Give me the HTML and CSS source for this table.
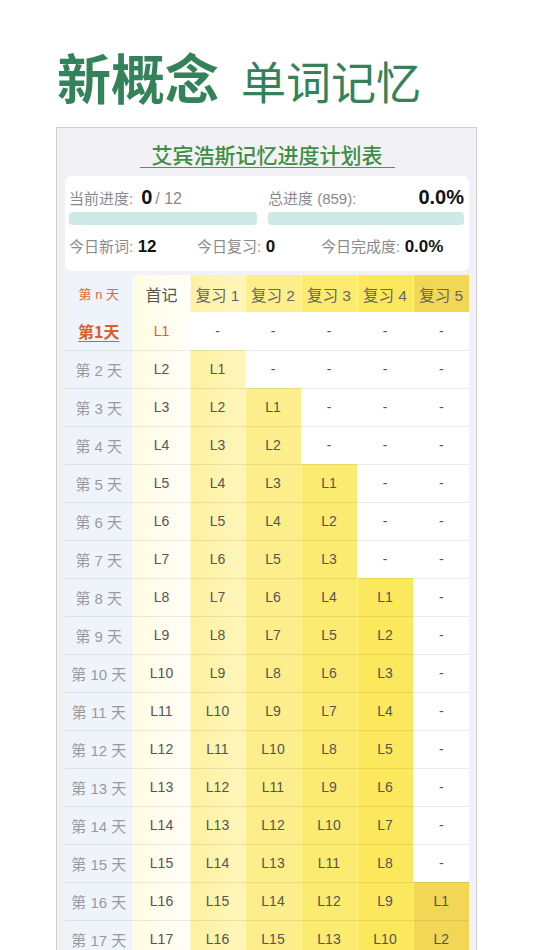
FILE: index.html
```html
<!DOCTYPE html>
<html lang="zh">
<head>
<meta charset="utf-8">
<link rel="stylesheet" href="styles.css">
</head>
<body>
<header class="hero">
  <span class="hero-main">新概念</span>
  <span class="hero-sub">单词记忆</span>
</header>
<section class="card">
  <div class="title-wrap"><h1 class="title">艾宾浩斯记忆进度计划表</h1></div>
  <div class="stats">
    <div class="stats-top">
      <div class="stat-col">
        <div class="stat-line">
          <span class="lbl">当前进度:</span>
          <span class="big">0</span><span class="frac">/ 12</span>
        </div>
        <div class="bar"></div>
      </div>
      <div class="stat-col">
        <div class="stat-line between">
          <span class="lbl">总进度 (859):</span>
          <span class="big">0.0%</span>
        </div>
        <div class="bar"></div>
      </div>
    </div>
    <div class="stats-bottom">
      <span class="item"><span class="lbl">今日新词:</span> <b>12</b></span>
      <span class="item"><span class="lbl">今日复习:</span> <b>0</b></span>
      <span class="item"><span class="lbl">今日完成度:</span> <b>0.0%</b></span>
    </div>
  </div>
  <table class="plan">
    <colgroup>
      <col class="w0"><col class="w1"><col class="w2"><col class="w3"><col class="w3"><col class="w3"><col class="w3">
    </colgroup>
    <thead>
      <tr>
        <th class="c0 nday">第 n 天</th>
        <th class="c1">首记</th>
        <th class="c2">复习 1</th>
        <th class="c3">复习 2</th>
        <th class="c4">复习 3</th>
        <th class="c5">复习 4</th>
        <th class="c6">复习 5</th>
      </tr>
    </thead>
    <tbody>
      <tr class="today"><td class="c0"><span class="today-lbl">第1天</span></td><td class="c1 hot">L1</td><td>-</td><td>-</td><td>-</td><td>-</td><td>-</td></tr>
      <tr><td class="c0">第 2 天</td><td class="c1">L2</td><td class="c2">L1</td><td>-</td><td>-</td><td>-</td><td>-</td></tr>
      <tr><td class="c0">第 3 天</td><td class="c1">L3</td><td class="c2">L2</td><td class="c3">L1</td><td>-</td><td>-</td><td>-</td></tr>
      <tr><td class="c0">第 4 天</td><td class="c1">L4</td><td class="c2">L3</td><td class="c3">L2</td><td>-</td><td>-</td><td>-</td></tr>
      <tr><td class="c0">第 5 天</td><td class="c1">L5</td><td class="c2">L4</td><td class="c3">L3</td><td class="c4">L1</td><td>-</td><td>-</td></tr>
      <tr><td class="c0">第 6 天</td><td class="c1">L6</td><td class="c2">L5</td><td class="c3">L4</td><td class="c4">L2</td><td>-</td><td>-</td></tr>
      <tr><td class="c0">第 7 天</td><td class="c1">L7</td><td class="c2">L6</td><td class="c3">L5</td><td class="c4">L3</td><td>-</td><td>-</td></tr>
      <tr><td class="c0">第 8 天</td><td class="c1">L8</td><td class="c2">L7</td><td class="c3">L6</td><td class="c4">L4</td><td class="c5">L1</td><td>-</td></tr>
      <tr><td class="c0">第 9 天</td><td class="c1">L9</td><td class="c2">L8</td><td class="c3">L7</td><td class="c4">L5</td><td class="c5">L2</td><td>-</td></tr>
      <tr><td class="c0">第 10 天</td><td class="c1">L10</td><td class="c2">L9</td><td class="c3">L8</td><td class="c4">L6</td><td class="c5">L3</td><td>-</td></tr>
      <tr><td class="c0">第 11 天</td><td class="c1">L11</td><td class="c2">L10</td><td class="c3">L9</td><td class="c4">L7</td><td class="c5">L4</td><td>-</td></tr>
      <tr><td class="c0">第 12 天</td><td class="c1">L12</td><td class="c2">L11</td><td class="c3">L10</td><td class="c4">L8</td><td class="c5">L5</td><td>-</td></tr>
      <tr><td class="c0">第 13 天</td><td class="c1">L13</td><td class="c2">L12</td><td class="c3">L11</td><td class="c4">L9</td><td class="c5">L6</td><td>-</td></tr>
      <tr><td class="c0">第 14 天</td><td class="c1">L14</td><td class="c2">L13</td><td class="c3">L12</td><td class="c4">L10</td><td class="c5">L7</td><td>-</td></tr>
      <tr><td class="c0">第 15 天</td><td class="c1">L15</td><td class="c2">L14</td><td class="c3">L13</td><td class="c4">L11</td><td class="c5">L8</td><td>-</td></tr>
      <tr><td class="c0">第 16 天</td><td class="c1">L16</td><td class="c2">L15</td><td class="c3">L14</td><td class="c4">L12</td><td class="c5">L9</td><td class="c6">L1</td></tr>
      <tr><td class="c0">第 17 天</td><td class="c1">L17</td><td class="c2">L16</td><td class="c3">L15</td><td class="c4">L13</td><td class="c5">L10</td><td class="c6">L2</td></tr>
    </tbody>
  </table>
</section>
</body>
</html>
```

FILE: styles.css
```css
* { box-sizing: border-box; }
html, body { margin: 0; padding: 0; background: #ffffff; }
body {
  font-family: "Liberation Sans", "Noto Sans CJK SC", sans-serif;
  color: #333;
  width: 534px;
  height: 950px;
  overflow: hidden;
}

.hero {
  display: flex;
  align-items: baseline;
  gap: 22px;
  padding: 49px 0 0 57px;
  height: 127px;
  font-family: "Noto Sans CJK SC", sans-serif;
  color: #33825a;
}
.hero-main { font-size: 54px; font-weight: 700; line-height: 56px; }
.hero-sub { font-size: 45px; font-weight: 400; line-height: 56px; }

.card {
  margin-left: 56px;
  width: 421px;
  background: #f2f2f6;
  border: 1px solid #cfcfd3;
  border-bottom: none;
  padding: 0 7px 0 8px;
}
.title-wrap { display: flex; justify-content: center; padding-top: 13px; }
.title {
  margin: 0;
  font-family: "Noto Sans CJK SC", sans-serif;
  font-size: 21px;
  font-weight: 500;
  line-height: 26px;
  color: #3f8e43;
  padding: 0 12px;
  border-bottom: 1.5px solid #4a9550;
}

.stats {
  margin-top: 8px;
  background: #ffffff;
  border-radius: 7px;
  height: 95px;
  padding: 10px 5px 0 4px;
}
.stats-top { display: grid; grid-template-columns: 188px 1fr; column-gap: 11px; }
.stat-line { display: flex; align-items: baseline; height: 22px; }
.stat-line.between { justify-content: space-between; }
.lbl {
  font-family: "Liberation Sans", "Noto Sans CJK SC", sans-serif;
  font-size: 15px;
  color: #8a8a8e;
}
.big { font-size: 20px; font-weight: 700; color: #111; margin-left: 8px; }
.stat-line.between .big { margin-left: 0; }
.frac { font-size: 16px; color: #8a8a8e; margin-left: 3px; }
.bar {
  margin-top: 4px;
  height: 13px;
  border-radius: 4px;
  background: #cde9e6;
}
.stats-bottom {
  display: grid;
  grid-template-columns: 128px 124px auto;
  margin-top: 10px;
  height: 22px;
  align-items: baseline;
}
.stats-bottom b { font-size: 17px; font-weight: 700; color: #111; }

.plan {
  margin-top: 4px;
  width: 404px;
  table-layout: fixed;
  border-collapse: collapse;
  font-size: 14px;
  color: #555;
}
.w0 { width: 68px; }
.w1 { width: 57px; }
.w2 { width: 55px; }
.w3 { width: 56px; }

.plan th, .plan td {
  padding: 0;
  text-align: center;
  background: #ffffff;
}
.plan thead tr { height: 37px; }
.plan th {
  font-family: "Liberation Sans", "Noto Sans CJK SC", sans-serif;
  font-weight: 400;
  font-size: 15.5px;
  color: #666;
  border-right: 1px solid rgba(255,255,255,0.7);
}
.plan th.c1 { font-size: 16px; color: #555; }
.plan tbody tr { height: 38px; }
.plan td { border-bottom: 1px solid rgba(0,0,0,0.08); border-right: 1px solid rgba(255,255,255,0.6); }
.plan td:last-child, .plan th:last-child { border-right: none; }

.plan .c0 {
  background: #eef4f9;
  font-family: "Liberation Sans", "Noto Sans CJK SC", sans-serif;
  font-size: 15px;
  color: #9a9a9e;
}
.plan th.nday { font-size: 13px; color: #e06a36; }
.plan .c1 { background: linear-gradient(to right, #fffbe2, #fffef7); }
.plan .c2 { background: linear-gradient(to right, #fdf1a0, #fef5bb); }
.plan .c3 { background: #fcee8a; }
.plan .c4 { background: #fbeb70; }
.plan .c5 { background: #fbe85c; }
.plan .c6 { background: #f2d656; }

.today-lbl {
  font-family: "Noto Sans CJK SC", sans-serif;
  font-size: 16px;
  font-weight: 700;
  color: #d9602e;
  text-decoration: underline;
  text-underline-offset: 3px;
}
.plan td.hot { color: #d9602e; }
```
